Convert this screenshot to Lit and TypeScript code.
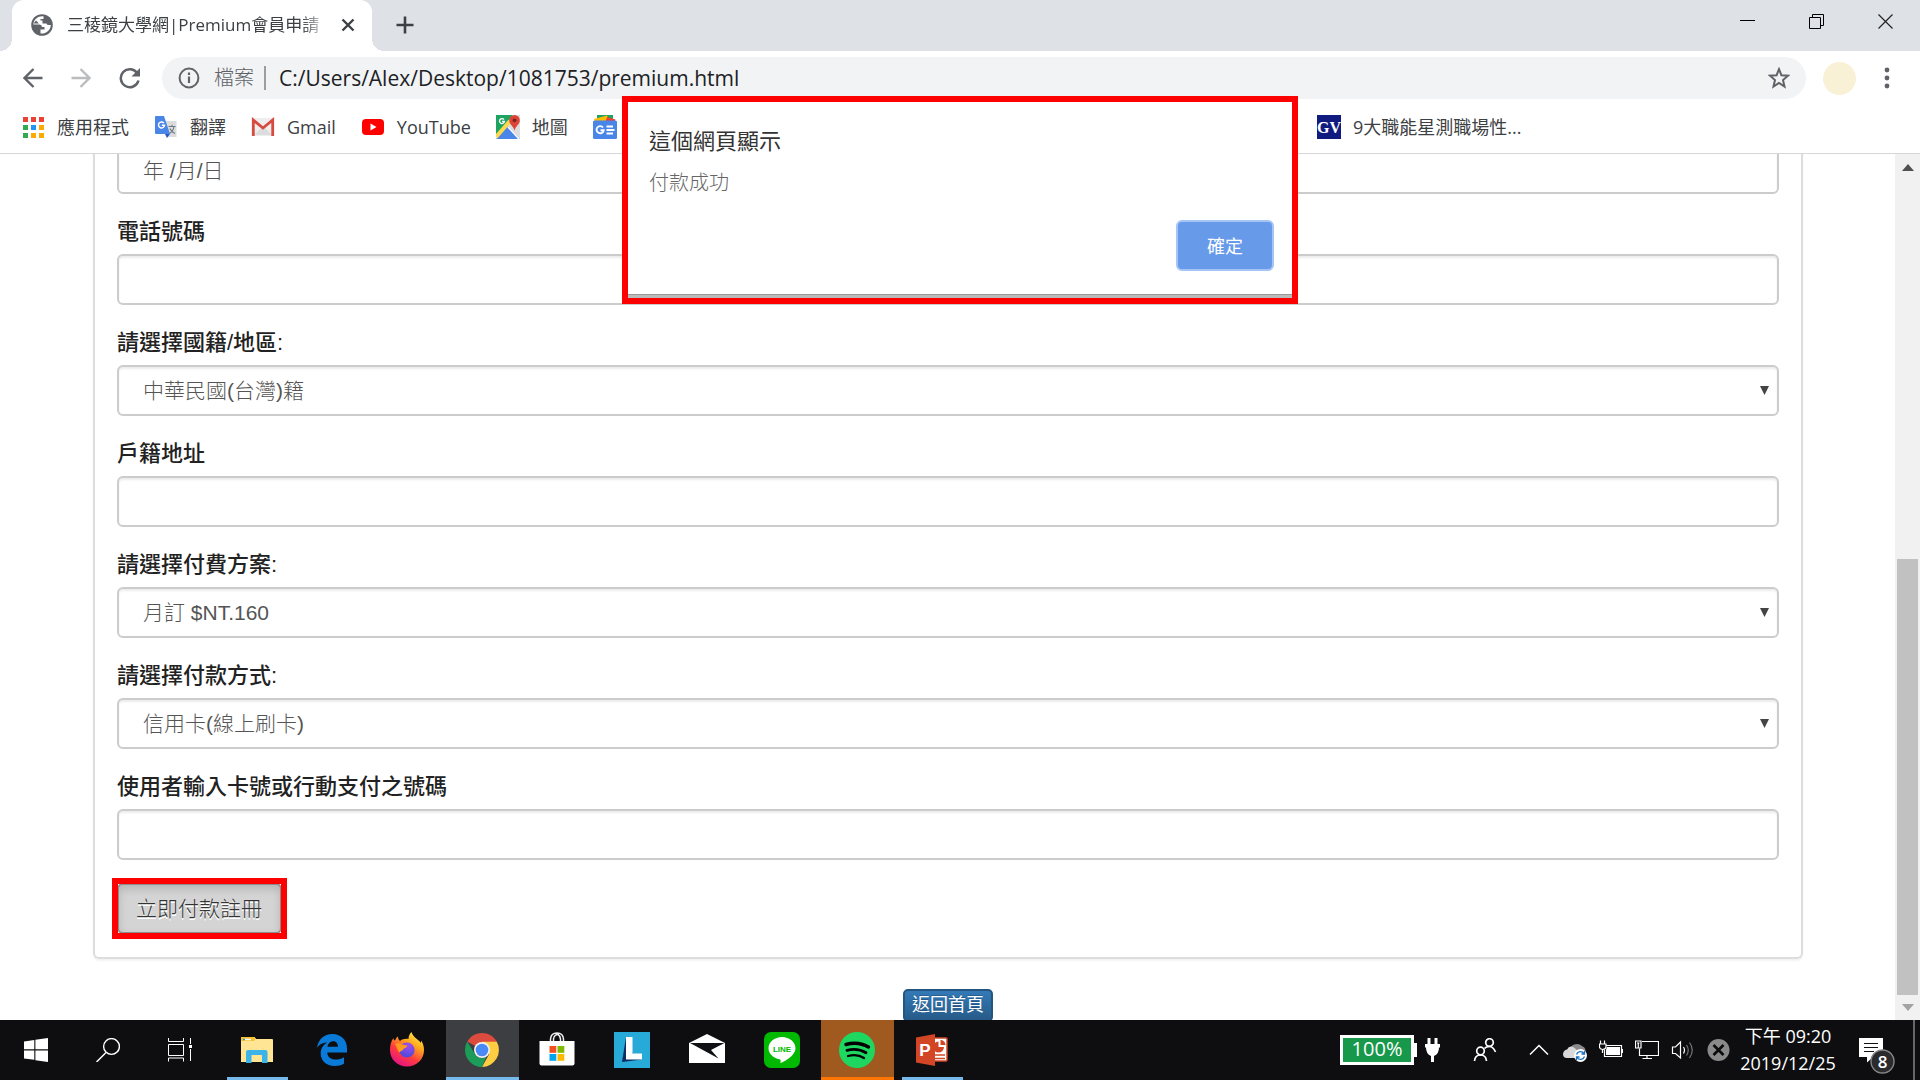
import { LitElement, html, svg, css, nothing, TemplateResult } from "lit";
import { customElement, property } from "lit/decorators.js";
import { classMap } from "lit/directives/class-map.js";

interface Field {
  id: string;
  label: string;
  kind: "input" | "select";
  value?: string;
}

const FIELDS: Field[] = [
  { id: "phone", label: "電話號碼", kind: "input" },
  { id: "nation", label: "請選擇國籍/地區:", kind: "select", value: "中華民國(台灣)籍" },
  { id: "address", label: "戶籍地址", kind: "input" },
  { id: "plan", label: "請選擇付費方案:", kind: "select", value: "月訂 $NT.160" },
  { id: "method", label: "請選擇付款方式:", kind: "select", value: "信用卡(線上刷卡)" },
  { id: "card", label: "使用者輸入卡號或行動支付之號碼", kind: "input" },
];

const icon = (w: number, h: number, body: TemplateResult | TemplateResult[]) =>
  html`<svg width=${w} height=${h} viewBox="0 0 ${w} ${h}" fill="none" aria-hidden="true">${body}</svg>`;

/* ---------- browser icons ---------- */

const globe = icon(22, 22, svg`
  <circle cx="11" cy="11" r="10.800" fill="#5f6368"/>
  <path fill="#fff" d="M12.500 2.300C8 1.500 2.800 4.500 2.300 10.500H8.500Q11 10.700 11 13H13.500V15.500H9.500V19.500C14 20.300 19.500 17 19.800 11H17.500Q16 11 15.500 9.500H11.500V6.500H9.500V5H12.500Z"/>
  <path fill="#5f6368" d="M2.300 10.500 7 15V16.500L9.500 19.500 5 18 2 14ZM5 6.500 8 9.500H2.500Z"/>`);
const closeTab = icon(14, 14, svg`<path d="M1.500 1.500 12.500 12.500M12.500 1.500 1.500 12.500" stroke="#3c4043" stroke-width="2.400"/>`);
const plus = icon(18, 18, svg`<path d="M9 0.500V17.500M0.500 9H17.500" stroke="#3c4043" stroke-width="2.600"/>`);
const winMin = icon(16, 16, svg`<path d="M0 6.500H15" stroke="#000"/>`);
const winRestore = icon(16, 16, svg`<path d="M0.500 3.500H11.500V14.500H0.500ZM3.500 3.500V0.500H14.500V11.500H11.500" stroke="#000"/>`);
const winClose = icon(16, 16, svg`<path d="M0.500 0.500 14.500 14.500M14.500 0.500 0.500 14.500" stroke="#222" stroke-width="1.200"/>`);
const back = icon(20, 20, svg`<path d="M19.500 10H2M10.500 1 1.500 10 10.500 19" stroke="#5f6368" stroke-width="2.400"/>`);
const forward = icon(20, 20, svg`<path d="M0.500 10H18M9.500 1 18.500 10 9.500 19" stroke="#babcbe" stroke-width="2.400"/>`);
const reload = icon(22, 22, svg`
  <path d="M18.500 6.500A9 9 0 1 0 19.500 13.500" stroke="#5f6368" stroke-width="2.500"/>
  <path d="M21 1V9.500H12.500Z" fill="#5f6368"/>`);
const info = icon(22, 22, svg`
  <circle cx="11" cy="11" r="9.400" stroke="#5f6368" stroke-width="2"/>
  <path d="M11 9.500V16M11 5.500V8" stroke="#5f6368" stroke-width="2.200"/>`);
const star = icon(22, 22, svg`
  <path d="M11 2.200 13.400 8.200 20 8.700 15 13 16.500 19.500 11 16 5.500 19.500 7 13 2 8.700 8.600 8.200Z" stroke="#5f6368" stroke-width="2"/>`);
const dots = icon(6, 22, svg`<circle cx="3" cy="3" r="2.400" fill="#5f6368"/><circle cx="3" cy="11" r="2.400" fill="#5f6368"/><circle cx="3" cy="19" r="2.400" fill="#5f6368"/>`);

/* ---------- bookmark icons ---------- */

const APP_COLORS = ["#ea4335", "#ea4335", "#ea4335", "#34a853", "#2196f3", "#fbab00", "#34a853", "#fbab00", "#fbab00"];
const appsIcon = icon(24, 24, APP_COLORS.map((c, i) =>
  svg`<rect x=${2 + (i % 3) * 8} y=${2 + Math.floor(i / 3) * 8} width="5" height="5" fill=${c}/>`));
const translateIcon = icon(24, 24, svg`
  <path d="M10 6H22.500V22H13Z" fill="#dcdcdc"/>
  <path d="M2 1H10L16 19H2Q1 19 1 18V2Q1 1 2 1Z" fill="#4a86e8"/>
  <path d="M11 19H16L13 23Z" fill="#2a56c6"/>
  <path d="M9.800 8A3 3 0 1 0 10.500 10.300H7.800" stroke="#fff" stroke-width="1.400"/>
  <path d="M14.500 11.500H21.500M18 9.800V11.500M20 11.500C19.500 15 17 17.500 15.500 18.500M15.800 13.500C17 16 19 17.500 21 18.500" stroke="#6b7a86" stroke-width="1.100"/>`);
const gmailIcon = icon(24, 24, svg`
  <rect x="1" y="3" width="22" height="18" rx="1.500" fill="#eee"/>
  <path d="M3 20 12 11 21 20Z" fill="#dcdcdc"/>
  <path d="M2.300 21V5L12 13 21.700 5V21" stroke="#d64a3f" stroke-width="2.800"/>`);
const youtubeIcon = icon(24, 24, svg`
  <rect x="1" y="4" width="22" height="16" rx="4" fill="#f00"/><path d="M9.500 8.500 15.500 12 9.500 15.500Z" fill="#fff"/>`);
const mapsIcon = icon(24, 24, svg`
  <path d="M0 0H17L0 21Z" fill="#1ea362"/><path d="M17 0H24V24L12 11Z" fill="#dedede"/>
  <path d="M12 11 24 24H0Z" fill="#4a86e8"/><path d="M0 22 14 6" stroke="#ffd84d" stroke-width="4"/>
  <path d="M12 12 23 24" stroke="#fff" stroke-width="1.500"/>
  <path d="M8 4.500A2.500 2.500 0 1 0 8.500 6.500H6" stroke="#fff" stroke-width="1.300"/>
  <path d="M18.500 0A5.300 5.300 0 0 0 13.200 5.300C13.200 9.500 17 10.500 18.500 15.500 20 10.500 23.800 9.500 23.800 5.300A5.300 5.300 0 0 0 18.500 0Z" fill="#dc4437"/>
  <circle cx="18.500" cy="5.300" r="1.900" fill="#7c231c"/>`);
const newsIcon = icon(24, 24, svg`
  <path d="M4 0H20V8H4Z" fill="#1ea362"/><path d="M1 4 14 0.500 17 7H2Z" fill="#fbbc04"/><path d="M14 2 22.500 4.500 21 8H12Z" fill="#ea4335"/>
  <rect x="0" y="5.500" width="24" height="18.500" rx="1.500" fill="#4a86e8"/>
  <path d="M10 12.500A3.600 3.600 0 1 0 10.700 15.300H7.500" stroke="#fff" stroke-width="1.900"/>
  <path d="M13.500 11.500H20M13.500 15H21.500M13.500 18.500H20" stroke="#fff" stroke-width="1.900"/>`);
const gvIcon = html`<svg width="24" height="24" viewBox="0 0 24 24" aria-hidden="true"><rect width="24" height="24" fill="#101b80"/>
  <text x="12" y="18" text-anchor="middle" font-family="Liberation Serif, serif" font-weight="700" font-size="16" fill="#fff">GV</text></svg>`;

const BOOKMARKS: [TemplateResult, string][] = [
  [appsIcon, "應用程式"],
  [translateIcon, "翻譯"],
  [gmailIcon, "Gmail"],
  [youtubeIcon, "YouTube"],
  [mapsIcon, "地圖"],
  [newsIcon, ""],
];

/* ---------- taskbar icons ---------- */

const startIcon = icon(24, 24, svg`<path fill="#fff" d="M0 3.500 10.300 2V11.300H0ZM11.400 1.800 24 0V11.300H11.400ZM0 12.500H10.300V21.800L0 20.500ZM11.400 12.500H24V24L11.400 22.200Z"/>`);
const searchIcon = icon(24, 24, svg`<circle cx="15.500" cy="8.500" r="7.900" stroke="#fff" stroke-width="1.400"/><path d="M10 14.500 0.500 24" stroke="#fff" stroke-width="1.500"/>`);
const taskViewIcon = icon(24, 24, svg`
  <path d="M0.500 0V3.500H15.500V0M0.500 6.500H15.500V17.500H0.500ZM0.500 23.500V20H15.500V23.500M22.500 0V6M22.500 11V23" stroke="#fff"/>
  <rect x="21" y="7" width="3" height="3" fill="#fff"/>`);
const explorerIcon = icon(36, 36, svg`
  <path d="M2 5H15.500L17 7H33Q34 7 34 8V30H2Z" fill="#ffe594"/><path d="M2 5H15.500L16.500 6.500 15 9H2Z" fill="#f8c42e"/>
  <path d="M5 7.500H12" stroke="#fff" stroke-width="1.500"/><path d="M4 7.500H6" stroke="#2a9fd6" stroke-width="1.500"/>
  <path d="M7 31V20Q7 18 9 18H26.500Q28.500 18 28.500 20V31H23V23H12.500V31Z" fill="#3cb4e7"/>`);
const edgeIcon = icon(36, 36, svg`
  <path fill="#0a7ad8" d="M3 15.800C4.200 7.500 10 2 18.300 2 27.500 2 33 8.400 33 16.500V20.500H13.200C13.400 25 17 27.500 21.500 27.500 24.800 27.500 27.800 26.600 30 25.200V31.800C27.300 33.300 24 34 20.500 34 12.500 34 6.700 29 6.700 21.500 6.700 16.800 9.200 12.800 13.300 10.600 8.500 10.400 5 12.700 3 15.800ZM13.500 14.800H24C24 11.800 22.500 9.300 19.200 9.300 16.200 9.300 13.900 11.700 13.500 14.800Z"/>`);
const firefoxIcon = icon(36, 36, svg`
  <defs>
    <linearGradient id="ffa" x1="0.850" y1="0" x2="0.250" y2="1"><stop offset="0" stop-color="#fff44f"/><stop offset="0.350" stop-color="#ffa41c"/><stop offset="0.650" stop-color="#ff3b40"/><stop offset="1" stop-color="#e3108a"/></linearGradient>
    <radialGradient id="ffb" cx="0.600" cy="0.200" r="0.800"><stop offset="0" stop-color="#a44cf0"/><stop offset="1" stop-color="#4a4bd8"/></radialGradient>
  </defs>
  <path fill="url(#ffa)" d="M22.500 0C20 2.500 19.500 5 19.500 7 16 6.500 13 7.500 11 9 9.500 8 9 6 9 4.500 7.500 5.500 6.500 7 6 8.500 4.500 7.800 4.500 6.500 4.500 6 2 9 1 13.500 1 18 1 27.500 8.500 34.500 18 34.500S35 27.500 35 18C35 14.500 34 11 32 8.500L32 11C30 8.500 28 7.500 26 5.500 24.500 4 23 2 22.500 0Z"/>
  <circle cx="18" cy="18" r="7.600" fill="url(#ffb)"/>
  <path d="M6 12C9 10 11.500 11 13 12.500L18.500 13.500C18 15.500 15.500 16 14.500 17 14 19 11 19 10.500 20.500 7.500 17.500 8 14 6 12Z" fill="#ff9a1f"/>`);
const chromeIcon = icon(36, 36, svg`
  <path d="M18 18 3.300 9.500A17 17 0 0 1 32.700 9.500Z" fill="#dd4b3e"/>
  <path d="M18 9.800H32.800A17 17 0 0 1 18 35L25.200 22Z" fill="#ffcd41"/>
  <path d="M3.300 9.500 11 22.200A8 8 0 0 0 22 25.200L18 35A17 17 0 0 1 3.300 9.500Z" fill="#1b9d59"/>
  <circle cx="18" cy="18" r="8" fill="#f3f3f3"/><circle cx="18" cy="18" r="6.300" fill="#4a8af4"/>`);
const storeIcon = icon(36, 36, svg`
  <path d="M11.500 10V7Q12 1 18 1T24.500 7V10M14.500 10V7Q15 2.500 20 2M21.500 10V7Q21 3 18 2" stroke="#eee" stroke-width="1.500"/>
  <path d="M0.500 9H35.500V31.500Q35.500 33.500 33.500 33.500H2.500Q0.500 33.500 0.500 31.500Z" fill="#fff"/>
  <path d="M10.500 14H17.300V20.800H10.500Z" fill="#f25022"/><path d="M18.500 14H25.300V20.800H18.500Z" fill="#7fba00"/>
  <path d="M10.500 22H17.300V28.800H10.500Z" fill="#00a4ef"/><path d="M18.500 22H25.300V28.800H18.500Z" fill="#ffb900"/>`);
const dictionaryIcon = icon(36, 36, svg`
  <rect width="36" height="36" fill="#27aad8"/><path d="M12 5 8 30 28 27.500 17 20Z" fill="#0d2c66"/>
  <path d="M12 5H18.500V21.500H28V27.500H12Z" fill="#fff"/>`);
const mailIcon = icon(36, 36, svg`
  <path d="M0 11 18 2 36 11V31H0Z" fill="#fff"/><path d="M1 11H35.500L22 18 29.500 26.500Z" fill="#101114"/>`);
const lineIcon = html`<svg width="36" height="36" viewBox="0 0 36 36" aria-hidden="true">
  <rect width="36" height="36" rx="7" fill="#00b900"/>
  <path fill="#fff" d="M18 5C10.500 5 4.500 10 4.500 16.200 4.500 21.700 9.200 26 15.500 27.200 17.300 27.600 16.500 29 16.300 31 20 30 31.500 23.500 31.500 16.200 31.500 10 25.500 5 18 5Z"/>
  <text x="18" y="20" text-anchor="middle" font-family="Liberation Sans, sans-serif" font-weight="700" font-size="8" fill="#00b900">LINE</text></svg>`;
const spotifyIcon = icon(36, 36, svg`
  <circle cx="18" cy="18" r="18" fill="#1ed760"/>
  <path d="M7 12.500C14 10.500 22.500 11 29.500 15" stroke="#000" stroke-width="3.400" stroke-linecap="round"/>
  <path d="M8 18.300C14 16.700 21.500 17.300 27 20.800" stroke="#000" stroke-width="2.800" stroke-linecap="round"/>
  <path d="M9 24C14.500 22.500 20.500 23 25 26" stroke="#000" stroke-width="2.300" stroke-linecap="round"/>`);
const pptIcon = html`<svg width="36" height="36" viewBox="0 0 36 36" aria-hidden="true">
  <rect x="19" y="6" width="14" height="23" rx="1" fill="#fff" stroke="#d24625" stroke-width="1.500"/>
  <path d="M24.500 9.500V15H30A5.500 5.500 0 1 1 24.500 9.500Z" fill="#d24625"/>
  <path d="M26.500 8V13H31.500A5 5 0 0 0 26.500 8Z" fill="#d24625"/>
  <path d="M21 23H31M21 26.500H31" stroke="#d24625" stroke-width="1.700"/>
  <path d="M2 5.500 21 2V34L2 30.500Z" fill="#d24625"/>
  <text x="11" y="24" text-anchor="middle" font-family="Liberation Sans, sans-serif" font-weight="700" font-size="17" fill="#fff">P</text></svg>`;

const TASKS: { name: string; glyph: TemplateResult; mark: string }[] = [
  { name: "檔案總管", glyph: explorerIcon, mark: "open" },
  { name: "Edge", glyph: edgeIcon, mark: "" },
  { name: "Firefox", glyph: firefoxIcon, mark: "" },
  { name: "Chrome", glyph: chromeIcon, mark: "active" },
  { name: "Store", glyph: storeIcon, mark: "" },
  { name: "字典", glyph: dictionaryIcon, mark: "" },
  { name: "郵件", glyph: mailIcon, mark: "" },
  { name: "LINE", glyph: lineIcon, mark: "" },
  { name: "Spotify", glyph: spotifyIcon, mark: "alert" },
  { name: "PowerPoint", glyph: pptIcon, mark: "open" },
];

const plugIcon = icon(15, 24, svg`<path fill="#fff" d="M2.500 0H5.500V6H9.500V0H12.500V6H15V9.500H14Q14 16 9 18V24H6V18Q1 16 1 9.500H0V6H2.500Z"/>`);
const peopleIcon = icon(24, 24, svg`
  <circle cx="16.500" cy="4.500" r="3.800" stroke="#fff" stroke-width="1.700"/><circle cx="7.500" cy="13" r="3.800" stroke="#fff" stroke-width="1.700"/>
  <path d="M1.500 23Q2 17 7.500 17T13.500 23M11.500 10.500Q13 8.500 16.500 8.500T22.500 14" stroke="#fff" stroke-width="1.700"/>`);
const TRAY = [
  icon(24, 24, svg`<path d="M3 16.500 12 7.500 21 16.500" stroke="#fff" stroke-width="1.500"/>`),
  icon(24, 24, svg`
    <path d="M7 13A7 6.500 0 0 1 19 8Q24 10 22 16H7Z" fill="#8a8a8a"/>
    <path d="M0 16Q0.500 12 4 11.500 6 7.500 10 9 17 13 17 20H4Q0 20 0 16Z" fill="#d8d8d8"/>
    <circle cx="17.500" cy="17.500" r="6.500" fill="#fff"/>
    <path d="M13.500 16.500A4.200 4.200 0 0 1 21 15.500M21.500 18.500A4.200 4.200 0 0 1 14 19.500M21.500 13V16H18.500M13.500 22V19H16.500" stroke="#1673c4" stroke-width="1.300"/>`),
  icon(24, 24, svg`
    <path d="M7 7.500H22.500V18.500H5.500V11.500" stroke="#fff" stroke-width="1.200"/><path d="M8 9H21V17H7V12Z" fill="#fff"/>
    <path d="M23.500 11V15M1.500 2.500V6M5.500 2.500V6M0 6H7V9Q7 11 3.500 11.500 0.500 11 0.500 9V6M3.500 11V15" stroke="#fff" stroke-width="1.200"/>`),
  icon(24, 24, svg`
    <path d="M7 3.500H23.500V17.500H4.500V10.500M12 17.500V20.500M7.500 20.500H17" stroke="#fff" stroke-width="1.200"/>
    <path d="M0.500 3H6V10H0.500ZM2 5H4.500M3.300 5V10" stroke="#fff" stroke-width="1.200"/>`),
  icon(24, 24, svg`
    <path d="M1.500 9H4.500L9.500 4V20L4.500 15.500H1.500Z" stroke="#fff" stroke-width="1.200"/><path d="M12.500 9Q14.500 12 12.500 15.500" stroke="#fff" stroke-width="1.200"/>
    <path d="M15.500 7Q19 12 15.500 17.500M18.500 4.500Q24 12 18.500 20" stroke="#777" stroke-width="1.200"/>`),
  icon(24, 24, svg`<circle cx="11.500" cy="12" r="11" fill="#8a8a8a"/><path d="M6.500 7 16.500 17M16.500 7 6.500 17" stroke="#0b0b0d" stroke-width="2.600"/>`),
];

@customElement("form-field")
class FormField extends LitElement {
  @property({ attribute: false }) field!: Field;

  static styles = css`
    :host { display: flex; flex-direction: column; gap: 7px; }
    .label {
      font-size: 22px; line-height: 30px; font-weight: 500; color: #222;
      font-family: "Liberation Sans", "Noto Sans CJK TC", sans-serif;
    }
    .box { display: grid; }
    .control {
      grid-area: 1 / 1; box-sizing: border-box; width: 100%; height: 51px; margin: 0; padding: 0 24px;
      border: 2px solid #ccc; border-radius: 6px; background: #fff; color: #555;
      box-shadow: inset 0 2px 2px rgba(0, 0, 0, 0.075); appearance: none; outline: none;
      font: 300 21px/30px "Liberation Sans", "Noto Sans CJK TC", sans-serif;
    }
    .arrow { grid-area: 1 / 1; justify-self: end; align-self: center; margin-right: 10px; pointer-events: none; }
  `;

  render() {
    const f = this.field;
    return html`
      ${f.label ? html`<label class="label" for=${f.id}>${f.label}</label>` : nothing}
      <div class="box">
        ${f.kind === "select"
          ? html`<select class="control" id=${f.id}><option selected>${f.value}</option></select>
              <svg class="arrow" width="9" height="9" viewBox="0 0 9 9" aria-hidden="true"><path d="M0 0H9L4.500 9Z" fill="#444"/></svg>`
          : html`<input class="control" id=${f.id} type="text" .value=${f.value ?? ""} aria-label=${f.label || "出生日期"}>`}
      </div>`;
  }
}

@customElement("browser-chrome")
class BrowserChrome extends LitElement {
  static styles = css`
    :host { display: block; font-family: "Open Sans", "Noto Sans CJK TC", sans-serif; color: #3c4043; border-bottom: 1px solid #d5d7da; }
    svg { display: block; flex: none; }
    button { display: flex; border: 0; padding: 0; background: none; }
    .strip { display: flex; height: 51px; background: #dee1e6; padding-left: 12px; }
    .tab {
      position: relative; display: flex; align-items: center; box-sizing: border-box; width: 360px; height: 51px;
      padding: 0 17px 2px 19px; background: #fff; border-radius: 12px 12px 0 0;
    }
    .tab::before, .tab::after { content: ""; position: absolute; bottom: 0; width: 12px; height: 12px; }
    .tab::before { left: -12px; background: radial-gradient(circle at 0 0, transparent 12px, #fff 12px); }
    .tab::after { right: -12px; background: radial-gradient(circle at 100% 0, transparent 12px, #fff 12px); }
    .title {
      flex: 1; min-width: 0; margin: 0 13px 0 14px; overflow: hidden; white-space: nowrap; font-size: 17px; line-height: 26px;
      mask-image: linear-gradient(to right, #000 90%, transparent);
    }
    .new-tab { align-self: center; margin: 0 0 1px 24px; }
    .window { display: flex; gap: 53px; align-items: flex-start; margin-left: auto; padding: 14px 26px 0 0; }
    .toolbar { display: flex; align-items: center; padding: 6px 30px 6px 23px; }
    .nav { display: flex; align-items: center; gap: 28px; padding-right: 21px; }
    .omni {
      flex: 1; display: flex; align-items: center; height: 42px; box-sizing: border-box; padding: 0 16px;
      border-radius: 21px; background: #f1f3f4; font-size: 20px;
    }
    .scheme { margin: 0 13px 0 14px; padding-right: 10px; border-right: 2px solid #9a9da1; line-height: 24px; font-weight: 300; color: #5f6368; }
    .url {
      flex: 1; min-width: 0; border: 0; padding: 0; background: none; color: #202124; outline: none;
      font: 21px/28px "Open Sans", "Noto Sans CJK TC", sans-serif;
    }
    .avatar { width: 33px; height: 33px; margin: 0 28px 0 17px; border-radius: 50%; background: #f9f1d5; }
    .marks { display: flex; align-items: center; box-sizing: border-box; height: 48px; padding: 0 21px 4px; }
    .group { display: flex; flex: 0 0 1296px; gap: 25px; }
    .mark { display: flex; align-items: center; gap: 12px; color: inherit; text-decoration: none; white-space: nowrap; font-size: 18px; line-height: 24px; }
  `;

  render() {
    return html`
      <div class="strip">
        <div class="tab">
          ${globe}<span class="title">三稜鏡大學網|Premium會員申請</span>
          <button aria-label="關閉分頁">${closeTab}</button>
        </div>
        <button class="new-tab" aria-label="新分頁">${plus}</button>
        <div class="window">
          <button aria-label="最小化">${winMin}</button>
          <button aria-label="還原">${winRestore}</button>
          <button aria-label="關閉">${winClose}</button>
        </div>
      </div>
      <div class="toolbar">
        <div class="nav">
          <button aria-label="上一頁">${back}</button>
          <button aria-label="下一頁">${forward}</button>
          <button aria-label="重新載入">${reload}</button>
        </div>
        <div class="omni">
          ${info}
          <label class="scheme" for="url">檔案</label>
          <input class="url" id="url" type="text" .value=${"C:/Users/Alex/Desktop/1081753/premium.html"}>
          <button aria-label="加入書籤">${star}</button>
        </div>
        <div class="avatar"></div>
        <button aria-label="選單">${dots}</button>
      </div>
      <nav class="marks">
        <div class="group">
          ${BOOKMARKS.map(([glyph, name]) => html`<a class="mark" href="#" aria-label=${name || "新聞"}>${glyph}${name}</a>`)}
        </div>
        <a class="mark" href="#">${gvIcon}9大職能星測職場性...</a>
      </nav>`;
  }
}

@customElement("task-bar")
class TaskBar extends LitElement {
  static styles = css`
    :host {
      display: flex; align-items: center; height: 60px; background: #0e0e11; color: #fff;
      font: 18px/26px "Open Sans", "Noto Sans CJK TC", sans-serif;
    }
    svg { display: block; }
    button { display: flex; align-items: center; justify-content: center; box-sizing: border-box; height: 60px; border: 0; padding: 0; background: none; color: inherit; font: inherit; }
    .system { width: 72px; }
    .apps { display: flex; gap: 2px; margin-left: 5px; }
    .app { width: 73px; padding-right: 2px; }
    .open { background: linear-gradient(#76b9ed, #76b9ed) center bottom / 61px 3px no-repeat; }
    .active { background: #3d3e41; box-shadow: inset 0 -3px #76b9ed; }
    .alert { background: #a05a20; box-shadow: inset 0 -3px #ff7500; }
    .meter { display: flex; align-items: center; margin-left: auto; }
    .charge { box-sizing: border-box; width: 74px; height: 30px; border: 3px solid #fff; background: #17984a; text-align: center; font-size: 20px; line-height: 22px; }
    .nub { width: 3px; height: 14px; background: #fff; margin-right: 8px; }
    .people { margin: 0 30px 0 33px; }
    .tray { display: flex; gap: 12px; }
    .clock { width: 100px; margin-left: 7px; text-align: center; line-height: 27px; white-space: nowrap; }
    .notice { margin: 0 18px 0 21px; padding-top: 12px; }
    .peek { width: 7px; border-left: 2px solid #666; }
  `;

  render() {
    return html`
      <button class="system" aria-label="開始">${startIcon}</button>
      <button class="system" aria-label="搜尋">${searchIcon}</button>
      <button class="system" aria-label="工作檢視">${taskViewIcon}</button>
      <div class="apps">
        ${TASKS.map((t) => html`<button
          class=${classMap({ app: true, open: t.mark === "open", active: t.mark === "active", alert: t.mark === "alert" })}
          aria-label=${t.name}>${t.glyph}</button>`)}
      </div>
      <div class="meter"><div class="charge">100%</div><div class="nub"></div>${plugIcon}</div>
      <button class="people" aria-label="人員">${peopleIcon}</button>
      <div class="tray">${TRAY}</div>
      <div class="clock"><div>下午 09:20</div><div>2019/12/25</div></div>
      <button class="notice" aria-label="通知">
        <svg width="36" height="36" viewBox="0 0 36 36">
          <path d="M0 0H24V19H14L8 24.500V19H0Z" fill="#fff"/><path d="M5 5.500H19M5 9.500H19M5 13.500H15" stroke="#111" stroke-width="1.200"/>
          <circle cx="23.500" cy="23.500" r="11.500" fill="#2b2b2d" stroke="#888" stroke-width="1.400"/>
          <text x="23.500" y="29.500" text-anchor="middle" font-family="Open Sans, sans-serif" font-weight="600" font-size="17" fill="#fff">8</text>
        </svg>
      </button>
      <button class="peek" aria-label="顯示桌面"></button>`;
  }
}

@customElement("app-root")
class AppRoot extends LitElement {
  static styles = css`
    :host {
      position: relative; display: flex; flex-direction: column; height: 100vh; overflow: hidden; background: #fff;
      font-family: "Liberation Sans", "Noto Sans CJK TC", sans-serif;
    }
    .view { flex: 1; min-height: 0; display: flex; overflow: hidden; }
    .page { flex: 1; display: flex; flex-direction: column; align-items: stretch; margin-top: -11px; padding: 0 92px 0 93px; }
    .card {
      display: flex; flex-direction: column; gap: 23px; padding: 0 22px 23px; border: 2px solid #ddd; border-top: 0;
      border-radius: 0 0 6px 6px; box-shadow: 0 2px 2px rgba(0, 0, 0, 0.05);
    }
    .frame { align-self: flex-start; display: flex; outline: 6px solid #f00; outline-offset: -1px; }
    .submit {
      height: 51px; padding: 0 18px 0 17px; border: 2px solid #8c8c8c; border-radius: 6px; background: #d4d4d4;
      box-shadow: inset 0 4px 8px rgba(0, 0, 0, 0.15); color: #333;
      font: 300 21px/30px "Liberation Sans", "Noto Sans CJK TC", sans-serif; text-shadow: 0 2px 0 #fff;
    }
    .home {
      align-self: center; margin-top: 30px; padding: 0 7px; border: 2px solid #245580; border-radius: 5px; color: #fff; text-decoration: none;
      background: linear-gradient(#337ab7, #265a88); font-size: 18px; line-height: 29px; text-shadow: 0 -1px 0 rgba(0, 0, 0, 0.2);
    }
    .scroll { flex: none; width: 25px; display: flex; flex-direction: column; align-items: center; justify-content: space-between; background: #f1f1f1; padding: 10px 0 9px; box-sizing: border-box; }
    .thumb { width: 21px; height: 436px; margin: auto 0 9px; background: #c1c1c1; }
    .dialog {
      position: absolute; top: 96px; left: 50%; transform: translateX(-50%); box-sizing: border-box; width: 676px; border: 6px solid #f00;
      background: #fff; box-shadow: inset 0 -3px #bbb, inset 0 -4px #999; padding: 24px 18px 27px 21px; display: flex; flex-direction: column; color: #333;
      font-family: "Open Sans", "Noto Sans CJK TC", sans-serif;
    }
    .heading { margin: 0; font-size: 22px; line-height: 28px; font-weight: 400; }
    .message { margin: 16px 0 24px; font-size: 20px; line-height: 26px; font-weight: 300; color: #666; }
    .ok {
      align-self: flex-end; width: 98px; height: 51px; border: 2px solid #a6c5f7; border-radius: 6px; background: #689aea; color: #fff;
      font: 18px/26px "Open Sans", "Noto Sans CJK TC", sans-serif;
    }
  `;

  render() {
    return html`
      <browser-chrome></browser-chrome>
      <div class="view">
        <main class="page">
          <form class="card" @submit=${(e: Event) => e.preventDefault()}>
            <form-field .field=${{ id: "birth", label: "", kind: "input", value: "年 /月/日" }}></form-field>
            ${FIELDS.map((f) => html`<form-field .field=${f}></form-field>`)}
            <div class="frame"><button class="submit" type="submit">立即付款註冊</button></div>
          </form>
          <a class="home" href="#">返回首頁</a>
        </main>
        <div class="scroll">
          <svg width="12" height="7" viewBox="0 0 12 7" aria-hidden="true"><path d="M0 7 6 0 12 7Z" fill="#505050"/></svg>
          <div class="thumb"></div>
          <svg width="12" height="7" viewBox="0 0 12 7" aria-hidden="true"><path d="M0 0 6 7 12 0Z" fill="#a3a3a3"/></svg>
        </div>
      </div>
      <task-bar></task-bar>
      <div class="dialog" role="alertdialog" aria-labelledby="heading">
        <h2 class="heading" id="heading">這個網頁顯示</h2>
        <p class="message">付款成功</p>
        <button class="ok">確定</button>
      </div>`;
  }
}
